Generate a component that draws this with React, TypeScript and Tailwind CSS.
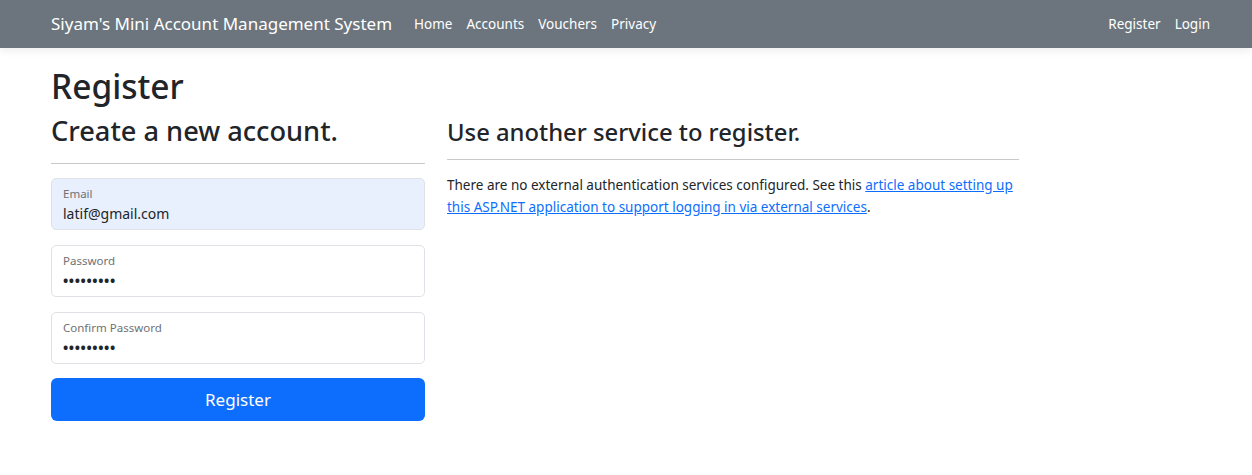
import React from "react";

const font = { fontFamily: '"Noto Sans", "Open Sans", sans-serif' };

function Field({ label, value, filled, password }: { label: string; value: string; filled?: boolean; password?: boolean }) {
  return (
    <div
      className={`h-[52px] rounded-[5px] border border-[#dee2e6] px-[11px] flex flex-col ${filled ? "bg-[#e8f0fe]" : "bg-white"}`}
    >
      <div className="text-[11.5px] leading-[14px] text-[#6f7174] mt-[8px]">{label}</div>
      {password ? (
        <div className="text-[14px] leading-[18px] text-[#212529] mt-[4px] tracking-[0.6px] font-bold">•••••••••</div>
      ) : (
        <div className="text-[14px] leading-[18px] text-[#212529] mt-[4px]">{value}</div>
      )}
    </div>
  );
}

export default function App() {
  return (
    <div style={font} className="min-h-[475px] bg-white text-[#212529]">
      <nav className="h-[48px] bg-[#6c757d] flex items-center shadow-[0_3px_8px_rgba(0,0,0,0.07)]">
        <div className="flex items-center w-full pl-[51px] pr-[42px]">
          <span className="text-[17px] text-white mr-[22px] leading-[24px]">Siyam's Mini Account Management System</span>
          <ul className="flex items-center gap-[14px] text-[13.5px] text-white leading-[20px]">
            <li>Home</li>
            <li>Accounts</li>
            <li>Vouchers</li>
            <li>Privacy</li>
          </ul>
          <ul className="flex items-center gap-[14px] text-[13.5px] text-white ml-auto leading-[20px]">
            <li>Register</li>
            <li>Login</li>
          </ul>
        </div>
      </nav>
      <main className="pl-[51px] pt-[17px]">
        <h1 className="text-[33.5px] leading-[42px] font-medium mb-[7px]">Register</h1>
        <div className="flex gap-[22px]">
          <div className="w-[374px]">
            <h2 className="text-[27.2px] leading-[34px] font-medium">Create a new account.</h2>
            <hr className="mt-[15px] mb-[14px] border-t border-[#c8c9ca]" />
            <div className="flex flex-col gap-[15px]">
              <Field label="Email" value="latif@gmail.com" filled />
              <Field label="Password" value="" password />
              <Field label="Confirm Password" value="" password />
            </div>
            <div className="mt-[14px] h-[43px] rounded-[6px] bg-[#0d6efd] text-white flex items-center justify-center text-[17px]">
              Register
            </div>
          </div>
          <div className="w-[572px]">
            <h3 className="text-[23.8px] leading-[30px] font-medium mt-[3px]">Use another service to register.</h3>
            <hr className="mt-[12px] mb-[14px] border-t border-[#c8c9ca]" />
            <p className="text-[13.5px] leading-[22px]">
              There are no external authentication services configured. See this{" "}
              <a className="text-[#0d6efd] underline">
                article about setting up this ASP.NET application to support logging in via external services
              </a>
              .
            </p>
          </div>
        </div>
      </main>
    </div>
  );
}
